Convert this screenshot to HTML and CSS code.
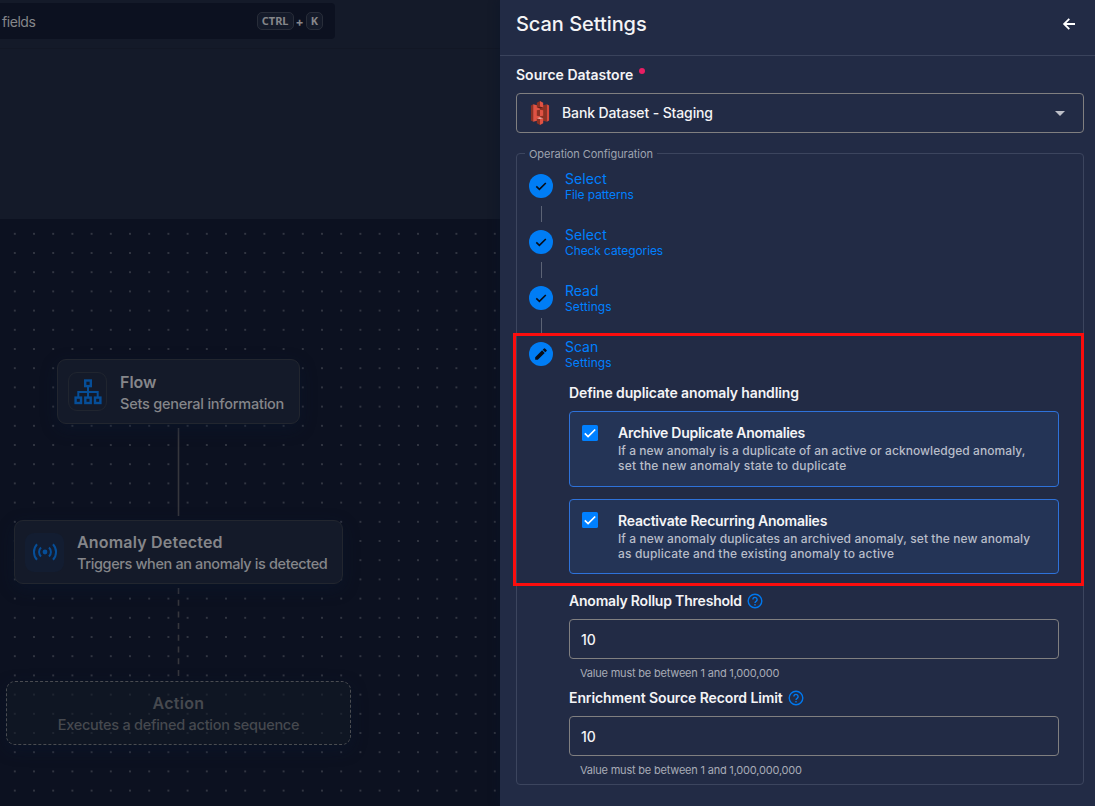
FILE: index.html
```
<!DOCTYPE html>
<html lang="en">
<head>
<meta charset="utf-8">
<title>Scan Settings</title>
<link rel="stylesheet" href="styles.css">
</head>
<body>
<div class="app">
  <main class="backdrop">
    <header class="topbar">
      <div class="search"><span class="search-text">fields</span><span class="keys"><kbd>CTRL</kbd><b>+</b><kbd>K</kbd></span></div>
    </header>
    <section class="summary"></section>
    <section class="canvas">
      <svg class="dots" width="500" height="587"><defs><pattern id="grid" x="5.2" y="5.2" width="19.2" height="19.2" patternUnits="userSpaceOnUse"><circle cx="9.6" cy="9.6" r=".75" fill="#686b73"/></pattern></defs><rect width="500" height="587" fill="url(#grid)"/></svg>
      <svg class="edges" width="500" height="587" fill="none" stroke="#36373d" stroke-width="1.6"><path d="M178.5 209V297"/><path d="M178.5 369V458" stroke-dasharray="6 5.7"/></svg>
      <article class="node flow">
        <div class="node-icon outlined"><svg width="28" height="26" viewBox="0 0 28 26" fill="none" stroke="#064e98" stroke-width="2.4"><rect x="11.2" y="1.5" width="5.6" height="5.6"/><rect x="1.6" y="18.6" width="5.4" height="5.4"/><rect x="11.3" y="18.6" width="5.4" height="5.4"/><rect x="21" y="18.6" width="5.4" height="5.4"/><path d="M14 7v11M4.3 18v-4.9h19.4V18" stroke-width="2"/></svg></div>
        <div><h3><span class="t-flow">Flow</span></h3><p><span class="t-sets">Sets general information</span></p></div>
      </article>
      <article class="node trigger">
        <div class="node-icon filled"><svg width="26" height="20" viewBox="0 0 26 20" fill="none" stroke="#064e98" stroke-width="2"><circle cx="13" cy="10" r="2.4" fill="#064e98" stroke="none"/><path d="M9 5.5a6.2 6.2 0 0 0 0 9M17 5.5a6.2 6.2 0 0 1 0 9M5 2.2a11.5 11.5 0 0 0 0 15.6M21 2.2a11.5 11.5 0 0 1 0 15.6"/></svg></div>
        <div><h3><span class="t-anom">Anomaly Detected</span></h3><p><span class="t-trig">Triggers when an anomaly is detected</span></p></div>
      </article>
      <article class="node action">
        <div><h3><span class="t-act">Action</span></h3><p><span class="t-exec">Executes a defined action sequence</span></p></div>
      </article>
    </section>
  </main>
  <aside class="panel">
    <header class="panel-head"><h1><span class="t-title">Scan Settings</span></h1>
      <svg width="14" height="14" viewBox="0 0 14 14" fill="none" stroke="#fff" stroke-width="1.8"><path d="M13 7H2.5M7.3 1.8 2.1 7l5.2 5.2"/></svg></header>
    <div class="panel-body">
      <div class="label"><span class="t-source">Source Datastore</span><i class="required"></i></div>
      <div class="select">
        <svg width="20" height="24" viewBox="0 0 22 24" preserveAspectRatio="none"><path fill="#8c3123" d="M1 4.5 3.5 3.2v17.6L1 19.5z"/><path fill="#e05243" d="M3.5 3.2 11 5v14l-7.5 1.8z"/><path fill="#8c3123" d="M18.5 3.2 11 5v14l7.5 1.8z"/><path fill="#d64a3c" d="m18.5 3.2 2.5 1.3v15l-2.5 1.3z"/><path fill="#8c3123" d="M11 0 7.5 1.8v4.8L11 5.8zM11 24l-3.5-1.8v-5l3.5.8z"/><path fill="#e05243" d="m11 0 3.5 1.8v4.8L11 5.8zM11 24l3.5-1.8v-5L11 18z"/><path fill="#8c3123" d="M7.5 9.2 11 8.8v6.4l-3.5-.4z"/><path fill="#e05243" d="m14.5 9.2-3.5-.4v6.4l3.5-.4z"/><path fill="#f2b0a9" d="m7.5 17.2 3.5-1 3.5 1L11 18z"/><path fill="#5e1f18" d="m7.5 6.6 3.5 1 3.5-1-3.5-.8z"/></svg>
        <span class="t-bank">Bank Dataset - Staging</span>
        <svg class="caret" width="10" height="5"><path d="M0 0h10L5 5z" fill="#bdbfc8"/></svg>
      </div>
      <section class="config">
        <div class="legend"><span class="t-legend">Operation Configuration</span></div>
        <div class="step"><div class="rail"><svg class="disc" viewBox="0 0 24 24"><circle cx="12" cy="12" r="12"/><path d="m7.3 12.4 3.1 3L16.8 9"/></svg><i></i></div><div class="step-text"><strong><span class="t-sel">Select</span></strong><span class="t-file">File patterns</span></div></div>
        <div class="step"><div class="rail"><svg class="disc" viewBox="0 0 24 24"><circle cx="12" cy="12" r="12"/><path d="m7.3 12.4 3.1 3L16.8 9"/></svg><i></i></div><div class="step-text"><strong><span class="t-sel">Select</span></strong><span class="t-check">Check categories</span></div></div>
        <div class="step"><div class="rail"><svg class="disc" viewBox="0 0 24 24"><circle cx="12" cy="12" r="12"/><path d="m7.3 12.4 3.1 3L16.8 9"/></svg><i></i></div><div class="step-text"><strong><span class="t-read">Read</span></strong><span class="t-set">Settings</span></div></div>
        <div class="step current"><div class="rail"><svg class="disc" viewBox="0 0 24 24"><circle cx="12" cy="12" r="12"/><path class="pencil" d="M6.2 15.2v2.6h2.6l6.9-6.9-2.6-2.6zM17.6 9a.7.7 0 0 0 0-1l-1.6-1.6a.7.7 0 0 0-1 0l-1.3 1.3 2.6 2.6z"/></svg></div><div class="step-text"><strong><span class="t-scan">Scan</span></strong><span class="t-set">Settings</span></div></div>
        <div class="fields">
          <div class="label define"><span class="t-define">Define duplicate anomaly handling</span></div>
          <div class="option first"><svg class="box" viewBox="0 0 16 16"><rect width="16" height="16" rx="1.6"/><path d="m2.8 8.3 3.3 3.3L13.2 4.5"/></svg><div><h4><span class="t-arch">Archive Duplicate Anomalies</span></h4><p><span class="t-d1">If a new anomaly is a duplicate of an active or acknowledged anomaly,</span><br><span class="t-d2">set the new anomaly state to duplicate</span></p></div></div>
          <div class="option second"><svg class="box" viewBox="0 0 16 16"><rect width="16" height="16" rx="1.6"/><path d="m2.8 8.3 3.3 3.3L13.2 4.5"/></svg><div><h4><span class="t-react">Reactivate Recurring Anomalies</span></h4><p><span class="t-d3">If a new anomaly duplicates an archived anomaly, set the new anomaly</span><br><span class="t-d4">as duplicate and the existing anomaly to active</span></p></div></div>
          <div class="label threshold"><span class="t-roll">Anomaly Rollup Threshold</span><svg class="help" viewBox="0 0 16 16"><circle cx="8" cy="8" r="6.8"/><path d="M5.9 6.5a2.1 2.1 0 1 1 3.4 1.6C8.4 8.7 8 9 8 10M8 11v1.4"/></svg></div>
          <div class="input"><span class="t-ten">10</span></div>
          <div class="hint"><span class="t-h1">Value must be between 1 and 1,000,000</span></div>
          <div class="label limit"><span class="t-enrich">Enrichment Source Record Limit</span><svg class="help" viewBox="0 0 16 16"><circle cx="8" cy="8" r="6.8"/><path d="M5.9 6.5a2.1 2.1 0 1 1 3.4 1.6C8.4 8.7 8 9 8 10M8 11v1.4"/></svg></div>
          <div class="input"><span class="t-ten">10</span></div>
          <div class="hint"><span class="t-h2">Value must be between 1 and 1,000,000,000</span></div>
        </div>
      </section>
    </div>
  </aside>
  <div class="highlight"></div>
</div>
</body>
</html>
```
FILE: styles.css
```
* { box-sizing: border-box; }
body { margin: 0; background: #0c1120; font-family: Inter, "Liberation Sans", sans-serif; font-size: 14px; }
h1, h3, h4, p { margin: 0; font-weight: 500; }
span { white-space: nowrap; }
.app { position: relative; display: grid; grid-template-columns: 500px 595px; height: 806px; overflow: hidden; }
.backdrop { display: flex; flex-direction: column; color: #85868a; min-width: 0; }
.topbar { height: 49px; padding-top: 3px; background: #141a29; border-bottom: 1px solid #121725; }
.search { width: 335px; height: 36px; padding: 0 12px 0 2px; display: flex; align-items: center; justify-content: space-between; background: #0c1120; border-radius: 0 4px 4px 0; }
.search-text { letter-spacing: -.45px; }
.keys { display: flex; align-items: center; gap: 2px; font-size: 12px; }
kbd { height: 18px; padding: 0 4px; border: 1px solid #282d39; border-radius: 5px; background: #141a29; font: bold 11px/16px "Noto Sans", sans-serif; }
.summary { height: 170px; background: #141a29; }
.canvas { position: relative; flex: 1; background: #0c1120; }
.dots, .edges { position: absolute; left: 0; top: 0; }
.node { position: absolute; display: flex; align-items: center; background: #141a29; border: 1px solid #22262f; border-radius: 9px; box-shadow: 0 5px 16px #0b1a3266; line-height: 21px; font-size: 14.5px; }
.node > div + div, .action > div { padding-top: 2px; }
.node h3 { font-size: 16px; font-weight: 600; line-height: 21px; }
.flow { left: 57px; top: 140px; width: 243px; height: 65px; padding-left: 10px; gap: 13px; }
.trigger { left: 14px; top: 301px; width: 329px; height: 64px; padding-left: 10px; gap: 13px; }
.action { left: 6px; top: 462px; width: 345px; height: 64px; justify-content: center; background: #131b2799; border: 1px dashed #4a4c51; color: #46494f; text-align: center; }
.t-sets { letter-spacing: -.23px; }
.t-anom { letter-spacing: .19px; }
.t-trig { letter-spacing: -.38px; }
.t-act { letter-spacing: .3px; }
.t-exec { letter-spacing: -.27px; }
.node-icon { flex: none; width: 39px; height: 39px; border-radius: 9px; display: grid; place-items: center; }
.outlined { border: 1px solid #20252f; }
.filled { background: #131d31; }
.panel { background: #222b45; color: #f4f4f6; z-index: 1; box-shadow: -3px 0 8px #0a142866; }
.panel-head { height: 56px; padding: 0 19px 8px 16px; display: flex; align-items: center; justify-content: space-between; border-bottom: 1px solid #3a435c; }
.panel-head h1 { font-size: 20px; line-height: 26px; letter-spacing: -.05px; }
.panel-body { padding: 9px 11px 0 16px; }
.label { height: 20px; line-height: 20px; display: flex; align-items: center; font-weight: 600; }
.required { width: 6px; height: 6px; margin: 0 0 8px 6px; border-radius: 50%; background: #e91e63; }
.select, .input { height: 40px; border: 1px solid #807f80; border-radius: 4px; display: flex; align-items: center; }
.select { margin-top: 8px; padding: 0 18px 0 13px; gap: 12px; font-weight: 500; }
.t-bank { letter-spacing: -.12px; margin-top: -1px; }
.caret { margin-left: auto; }
.config { margin-top: 20px; height: 632px; border: 1px solid #3c455e; border-radius: 4px; padding: 0 24px 0 12px; }
.legend { width: 132px; height: 20px; margin: -10px 0 10px -4px; padding-left: 4px; background: #222b45; color: #9ea3b0; font-size: 11px; line-height: 21px; letter-spacing: -.05px; }
.step { height: 56px; display: flex; gap: 12px; color: #0080ff; font-size: 12px; }
.rail { width: 24px; display: flex; flex-direction: column; align-items: center; }
.rail i { width: 1px; height: 16px; margin-top: 8px; background: #5c6375; }
.disc { width: 24px; height: 24px; fill: #007df5; }
.disc path { fill: none; stroke: #080d18; stroke-width: 1.6; }
.disc .pencil { fill: #080d18; stroke: none; }
.step-text { display: flex; flex-direction: column; margin-top: -4px; line-height: 15px; }
.step-text strong { font-size: 14px; font-weight: 400; line-height: 17px; }
.t-sel, .t-set { letter-spacing: .1px; }
.t-file, .t-check { letter-spacing: -.1px; }
.current { height: 29px; }
.fields { margin-left: 40px; padding-top: 12px; }
.define { margin-bottom: 8px; }
.t-define { letter-spacing: -.13px; }
.option { display: flex; gap: 20px; padding: 11px 12px; margin-bottom: 12px; border: 1px solid #2e72da; border-radius: 4px; background: #243456; }
.first { height: 76px; }
.second { height: 75px; }
.box { flex: none; width: 16px; height: 16px; margin-top: 2px; fill: #0080ff; }
.second .box { margin-top: 1px; }
.box path { fill: none; stroke: #fff; stroke-width: 1.7; }
.option h4 { font-size: 14px; line-height: 20px; font-weight: 600; }
.option p { color: #b8bdc9; font-size: 12px; line-height: 14.5px; margin-top: 1px; }
.t-arch { letter-spacing: -.28px; }
.t-d1 { letter-spacing: .06px; }
.t-d2 { letter-spacing: .21px; }
.t-react { letter-spacing: -.23px; }
.t-d3 { letter-spacing: .09px; }
.t-d4 { letter-spacing: .18px; }
.threshold { margin: 17px 0 8px; }
.limit { margin: 0 0 8px; }
.t-roll { letter-spacing: -.2px; }
.t-enrich { letter-spacing: -.1px; }
.help { width: 16px; height: 16px; margin-left: 5px; fill: none; stroke: #0078ef; stroke-width: 1.4; }
.input { padding-left: 11px; font-weight: 500; }
.hint { height: 29px; padding-left: 11px; font-size: 11px; line-height: 28px; color: #a8acb7; letter-spacing: -.2px; }
.highlight { position: absolute; z-index: 2; left: 513px; top: 333px; width: 571px; height: 253px; border: 3px solid #fb0d0d; }
```
